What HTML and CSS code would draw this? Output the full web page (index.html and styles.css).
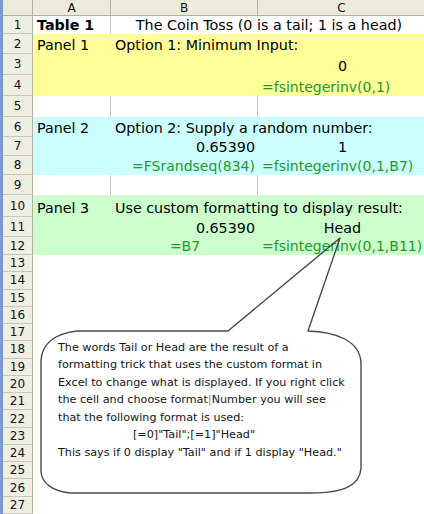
FILE: index.html
```html
<!DOCTYPE html>
<html>
<head>
<meta charset="utf-8">
<title>The Coin Toss</title>
<link rel="stylesheet" href="styles.css">
</head>
<body>
<div class="wrap">
  <div class="sheet">
    <div class="corner"></div>
    <div class="colhead">A</div>
    <div class="colhead">B</div>
    <div class="colhead">C</div>

    <div class="rowhead">1</div>
    <div class="cell white gl bold">Table 1</div>
    <div class="cell white span2 center">The Coin Toss (0 is a tail; 1 is a head)</div>

    <div class="rowhead">2</div>
    <div class="cell yellow">Panel 1</div>
    <div class="cell yellow span2">Option 1: Minimum Input:</div>

    <div class="rowhead">3</div>
    <div class="cell yellow"></div>
    <div class="cell yellow"></div>
    <div class="cell yellow center">0</div>

    <div class="rowhead">4</div>
    <div class="cell yellow"></div>
    <div class="cell yellow"></div>
    <div class="cell yellow formula">=fsintegerinv(0,1)</div>

    <div class="rowhead">5</div>
    <div class="cell white gl"></div>
    <div class="cell white gl"></div>
    <div class="cell white"></div>

    <div class="rowhead">6</div>
    <div class="cell cyan">Panel 2</div>
    <div class="cell cyan span2">Option 2: Supply a random number:</div>

    <div class="rowhead">7</div>
    <div class="cell cyan"></div>
    <div class="cell cyan right">0.65390</div>
    <div class="cell cyan center">1</div>

    <div class="rowhead">8</div>
    <div class="cell cyan"></div>
    <div class="cell cyan right formula">=FSrandseq(834)</div>
    <div class="cell cyan formula">=fsintegerinv(0,1,B7)</div>

    <div class="rowhead">9</div>
    <div class="cell white gl"></div>
    <div class="cell white gl"></div>
    <div class="cell white"></div>

    <div class="rowhead">10</div>
    <div class="cell green">Panel 3</div>
    <div class="cell green span2">Use custom formatting to display result:</div>

    <div class="rowhead">11</div>
    <div class="cell green"></div>
    <div class="cell green right">0.65390</div>
    <div class="cell green center">Head</div>

    <div class="rowhead">12</div>
    <div class="cell green"></div>
    <div class="cell green center formula">=B7</div>
    <div class="cell green formula">=fsintegerinv(0,1,B11)</div>

    <div class="rowhead">13</div><div class="cell white span3"></div>
    <div class="rowhead">14</div><div class="cell white span3"></div>
    <div class="rowhead">15</div><div class="cell white span3"></div>
    <div class="rowhead">16</div><div class="cell white span3"></div>
    <div class="rowhead">17</div><div class="cell white span3"></div>
    <div class="rowhead">18</div><div class="cell white span3"></div>
    <div class="rowhead">19</div><div class="cell white span3"></div>
    <div class="rowhead">20</div><div class="cell white span3"></div>
    <div class="rowhead">21</div><div class="cell white span3"></div>
    <div class="rowhead">22</div><div class="cell white span3"></div>
    <div class="rowhead">23</div><div class="cell white span3"></div>
    <div class="rowhead">24</div><div class="cell white span3"></div>
    <div class="rowhead">25</div><div class="cell white span3"></div>
    <div class="rowhead">26</div><div class="cell white span3"></div>
    <div class="rowhead">27</div><div class="cell white span3"></div>
    <div class="rowhead"></div><div class="cell white span3"></div>
  </div>

  <svg class="callout-shape" width="424" height="514" viewBox="0 0 424 514">
    <path d="M41 360 C42 346 52 334 77 331 L228 331 L340 238 L308 331 C335 332 360 340 361 363 L361 468 C360 485 345 493 310 493 L70 493 C52 491 42 483 41 472 Z"
          fill="none" stroke="#4a4a4a" stroke-width="1.4" stroke-linejoin="round"/>
  </svg>
  <div class="callout-text">
    <div>The words Tail or Head are the result of a</div>
    <div>formatting trick that uses the custom format in</div>
    <div>Excel to change what is displayed. If you right click</div>
    <div>the cell and choose format<span class="bar">|</span>Number you will see</div>
    <div>that the following format is used:</div>
    <div class="indent">[=0]"Tail";[=1]"Head"</div>
    <div>This says if 0 display "Tail" and if 1 display "Head."</div>
  </div>
</div>
</body>
</html>
```

FILE: styles.css
```css
html, body {
  margin: 0;
  padding: 0;
  background: #ffffff;
}

body {
  font-family: "DejaVu Sans", "Noto Sans", sans-serif;
  color: #000;
  overflow: hidden;
}

.wrap {
  position: relative;
  width: 424px;
  height: 514px;
  overflow: hidden;
}

.sheet {
  display: grid;
  width: 426px;
  border-left: 3px solid #7b97d6;
  grid-template-columns: 30px 78px 147px 168px;
  grid-template-rows: 16px 18px 20px 21px 21px 21px 20px 19px 19px 20px 22px 20px 18px repeat(16, 17.27px);
}

.corner,
.colhead,
.rowhead {
  box-sizing: border-box;
  background: #ecead9;
  border-right: 1px solid #b3b09f;
  border-bottom: 1px solid #b3b09f;
  display: flex;
  align-items: center;
  justify-content: center;
  font-size: 12px;
  color: #111;
}

.rowhead {
  background: #efeee2;
  border-bottom-color: #c9c6b5;
}

.cell {
  box-sizing: border-box;
  display: flex;
  align-items: flex-end;
  padding: 0 3px 0 4px;
  font-size: 14.3px;
  line-height: 17px;
  white-space: nowrap;
  overflow: visible;
  min-width: 0;
}

.span2 { grid-column: span 2; }
.span3 { grid-column: span 3; }

.center { justify-content: center; }
.right { justify-content: flex-end; }
.bold { font-weight: bold; }

.gl { border-right: 1px solid #c7c7c7; }

.white { background: #ffffff; }
.yellow { background: #ffff99; }
.cyan { background: #ccffff; }
.green { background: #ccffcc; }

.formula {
  color: #22992a;
  font-size: 14px;
}

.callout-shape {
  position: absolute;
  left: 0;
  top: 0;
}

.callout-text {
  position: absolute;
  left: 58px;
  top: 339px;
  font-size: 11.2px;
  line-height: 17.45px;
  color: #141420;
  white-space: nowrap;
}

.callout-text .indent {
  padding-left: 75px;
}

.callout-text .bar {
  color: #4f93b8;
}
```
